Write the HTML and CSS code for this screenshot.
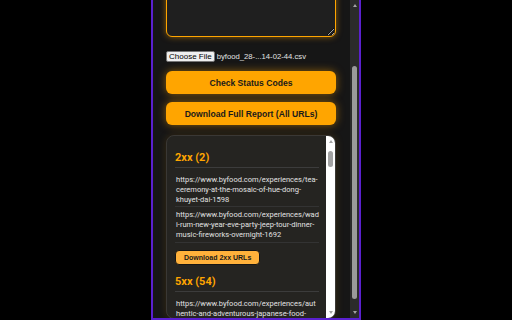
FILE: index.html
```html
<!DOCTYPE html>
<html lang="en">

<head>
    <meta charset="UTF-8">
    <meta name="viewport" content="width=device-width, initial-scale=1.0">
    <title>Status Code Checker</title>
    <link rel="stylesheet" href="styles.css">
</head>

<body>
    <div class="popup">
        <div class="content" id="content">
            <h1 class="title">Status Code Checker</h1>
            <textarea class="urlInput" id="urlInput"></textarea>

            <div class="fileRow">
                <span class="fileBtn">Choose File</span>
                <span class="fileName">byfood_28-...14-02-44.csv</span>
            </div>

            <button class="btn">Check Status Codes</button>
            <button class="btn">Download Full Report (All URLs)</button>

            <div class="results">
                <div class="resultsList">
                    <section class="group">
                        <h2>2xx (2)</h2>
                        <ul>
                            <li>https://www.byfood.com/experiences/tea-ceremony-at-the-mosaic-of-hue-dong-khuyet-dai-1598</li>
                            <li>https://www.byfood.com/experiences/wadi-rum-new-year-eve-party-jeep-tour-dinner-music-fireworks-overnight-1692</li>
                        </ul>
                        <button class="btnSmall">Download 2xx URLs</button>
                    </section>

                    <section class="group">
                        <h2>5xx (54)</h2>
                        <ul>
                            <li>https://www.byfood.com/experiences/authentic-and-adventurous-japanese-food-tour-in-shinjuku-1204</li>
                            <li>https://www.byfood.com/experiences/tokyo-tsukiji-outer-market-food-tour-1122</li>
                            <li>https://www.byfood.com/experiences/osaka-dotonbori-street-food-night-tour-1345</li>
                            <li>https://www.byfood.com/experiences/kyoto-nishiki-market-walking-tour-1187</li>
                        </ul>
                        <button class="btnSmall">Download 5xx URLs</button>
                    </section>
                </div>

                <!-- barre de defilement de la liste -->
                <div class="listBar">
                    <span class="arrowUp"></span>
                    <div class="listTrack"><span class="listThumb"></span></div>
                    <span class="arrowDown"></span>
                </div>
            </div>
        </div>

        <!-- barre de defilement de la page -->
        <div class="pageBar">
            <span class="arrowUp"></span>
            <div class="pageTrack"><span class="pageThumb"></span></div>
            <span class="arrowDown"></span>
        </div>
    </div>

    <script>
        // la page est deja descendue jusqu'aux resultats
        const content = document.getElementById('content')
        const urlInput = document.getElementById('urlInput')
        content.scrollTop = urlInput.getBoundingClientRect().bottom - 37
    </script>
</body>

</html>
```

FILE: styles.css
```css
:root {
    --orange: #ffa500;
    --orangeLight: #ffb13b;
    --purple: #5a20cf;
    --bgDark: #161616;
    --textLight: #e2e2e2;
    --barGrey: #a3a3a3;
}

* {
    box-sizing: border-box;
}

body {
    margin: 0;
    height: 320px;
    background-color: #000000;
    font-family: 'Liberation Sans', Arial, sans-serif;
    overflow: hidden;
}

.popup {
    display: flex;
    width: 210px;
    height: 320px;
    margin: 0 auto;
    border: 2px solid var(--purple);
    border-top: none;
    background-color: var(--bgDark);
}

.content {
    flex: 1;
    display: flex;
    flex-direction: column;
    overflow: hidden;
    padding: 12px 14px 8px 13px;
}

.title {
    margin: 0 0 10px;
    font-size: 14px;
    color: var(--orange);
    text-align: center;
}

.urlInput {
    flex: none;
    width: 100%;
    height: 100px;
    background-color: #1f1f1f;
    border: 1.5px solid var(--orange);
    border-radius: 6px;
    box-shadow: 0 0 6px rgba(255, 165, 0, 0.5);
    color: var(--textLight);
    resize: vertical;
}

.fileRow {
    display: flex;
    align-items: center;
    gap: 2px;
    margin: 14px 0 9px;
}

.fileBtn {
    background-color: #efefef;
    border: 1px solid #767676;
    border-radius: 2px;
    padding: 0 2px;
    font-size: 8px;
    line-height: 9px;
    color: #000000;
}

.fileName {
    font-size: 7.7px;
    color: var(--textLight);
}

.btn {
    flex: none;
    height: 23px;
    margin-bottom: 8px;
    background-color: var(--orange);
    border: none;
    border-radius: 6px;
    box-shadow: 0 0 8px rgba(255, 165, 0, 0.5);
    font-family: 'Liberation Sans', Arial, sans-serif;
    font-size: 8.6px;
    font-weight: bold;
    color: #1a1a1a;
}

.results {
    flex: none;
    display: flex;
    height: 184px;
    margin-top: 2px;
    overflow: hidden;
    background-color: #252421;
    border: 1px solid #3a3835;
    border-radius: 8px;
    box-shadow: 0 0 8px rgba(255, 165, 0, 0.15);
}

.resultsList {
    flex: 1;
    overflow: hidden;
    padding: 5px 7px 8px 8px;
}

.group h2 {
    margin: 10px 0 4px;
    padding-bottom: 2px;
    border-bottom: 1px solid #3c3c3c;
    font-family: Roboto, sans-serif;
    font-size: 11px;
    line-height: 14px;
    color: var(--orange);
}

.group ul {
    list-style: none;
    margin: 0;
    padding: 0;
}

.group li {
    padding: 3px 0 2px 1px;
    border-bottom: 1px solid #333333;
    font-family: Roboto, sans-serif;
    font-size: 7.5px;
    line-height: 9.8px;
    color: var(--textLight);
    overflow-wrap: anywhere;
}

.btnSmall {
    height: 15px;
    margin-top: 7px;
    padding: 0 8px;
    background-color: var(--orangeLight);
    border: 1px solid #151515;
    border-radius: 4px;
    font-family: 'Liberation Sans', Arial, sans-serif;
    font-size: 7px;
    font-weight: bold;
    color: #1a1a1a;
}

/* barres de defilement dessinees */
.listBar {
    display: flex;
    flex-direction: column;
    align-items: center;
    width: 9px;
    background-color: #ffffff;
}

.listTrack {
    flex: 1;
    padding-top: 4px;
}

.listThumb {
    display: block;
    width: 5px;
    height: 16px;
    background-color: var(--barGrey);
    border-radius: 3px;
}

.pageBar {
    display: flex;
    flex-direction: column;
    align-items: center;
    width: 9px;
    background-color: #2b2b2b;
}

.pageTrack {
    flex: 1;
    padding-top: 55px;
}

.pageThumb {
    display: block;
    width: 5px;
    height: 233px;
    background-color: #9a9a9a;
    border-radius: 3px;
}

.arrowUp,
.arrowDown {
    flex: none;
    width: 0;
    height: 0;
    margin: 4px 0;
    border-left: 2.5px solid transparent;
    border-right: 2.5px solid transparent;
}

.arrowUp {
    border-bottom: 3px solid var(--barGrey);
}

.arrowDown {
    border-top: 3px solid var(--barGrey);
}
```
